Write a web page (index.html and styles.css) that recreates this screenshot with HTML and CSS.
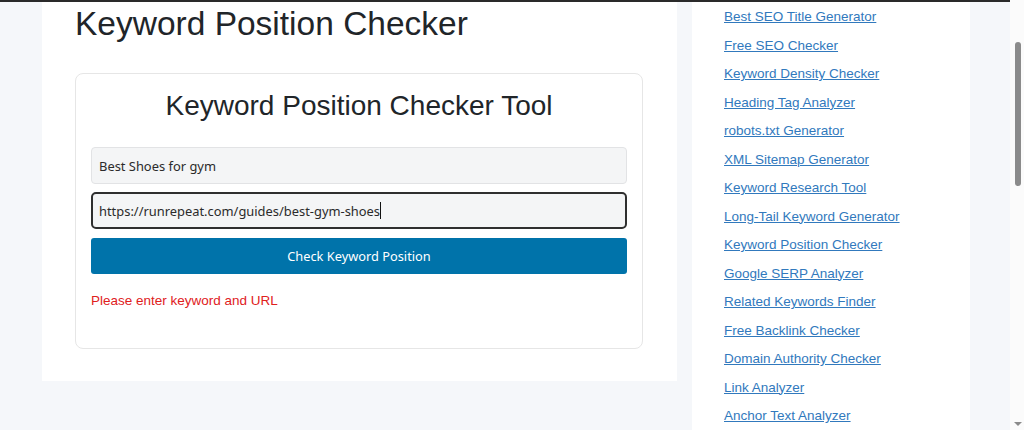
FILE: index.html
```html
<!DOCTYPE html>
<html lang="en">
<head>
<meta charset="utf-8">
<title>Keyword Position Checker</title>
<link rel="stylesheet" href="styles.css">
</head>
<body>
<div class="frame">
  <div class="viewport">
    <div class="topline"></div>
    <div class="page">
      <main class="main">
        <h1 class="page-title">Keyword Position Checker</h1>
        <section class="card">
          <h2 class="card-title">Keyword Position Checker Tool</h2>
          <div class="field">Best Shoes for gym</div>
          <div class="field field-focus">https://runrepeat.com/guides/best-gym-shoes<span class="caret"></span></div>
          <button class="btn" type="button">Check Keyword Position</button>
          <p class="error">Please enter keyword and URL</p>
        </section>
      </main>
      <aside class="sidebar">
        <ul class="links">
          <li><a href="#">Best SEO Title Generator</a></li>
          <li><a href="#">Free SEO Checker</a></li>
          <li><a href="#">Keyword Density Checker</a></li>
          <li><a href="#">Heading Tag Analyzer</a></li>
          <li><a href="#">robots.txt Generator</a></li>
          <li><a href="#">XML Sitemap Generator</a></li>
          <li><a href="#">Keyword Research Tool</a></li>
          <li><a href="#">Long-Tail Keyword Generator</a></li>
          <li><a href="#">Keyword Position Checker</a></li>
          <li><a href="#">Google SERP Analyzer</a></li>
          <li><a href="#">Related Keywords Finder</a></li>
          <li><a href="#">Free Backlink Checker</a></li>
          <li><a href="#">Domain Authority Checker</a></li>
          <li><a href="#">Link Analyzer</a></li>
          <li><a href="#">Anchor Text Analyzer</a></li>
        </ul>
      </aside>
    </div>
  </div>
  <div class="scrollbar">
    <div class="thumb"></div>
    <div class="arrow"></div>
  </div>
</div>
</body>
</html>
```

FILE: styles.css
```css
html, body {
  margin: 0;
  padding: 0;
  height: 430px;
  overflow: hidden;
}
body {
  font-family: "Liberation Sans", Arial, sans-serif;
  background: #f5f7fa;
  color: #212529;
}
.frame {
  display: flex;
  height: 430px;
}
.viewport {
  flex: 1;
  display: flex;
  flex-direction: column;
  min-width: 0;
}
.topline {
  height: 2px;
  background: #2a2a2a;
  flex: none;
}
.page {
  flex: 1;
  display: flex;
  align-items: flex-start;
  padding-left: 42px;
  gap: 15px;
}
.main {
  width: 635px;
  height: 379px;
  box-sizing: border-box;
  background: #fff;
  padding: 2px 34px 0 33px;
}
.page-title {
  margin: 0;
  font-size: 33.5px;
  line-height: 40px;
  font-weight: 400;
  color: #212529;
}
.card {
  margin-top: 29px;
  border: 1px solid #e6e6e6;
  border-radius: 8px;
  padding: 15px 15px 37px;
  display: flex;
  flex-direction: column;
}
.card-title {
  margin: 0 0 25px;
  font-size: 28px;
  line-height: 33px;
  font-weight: 400;
  text-align: center;
  color: #212529;
}
.field {
  height: 37px;
  box-sizing: border-box;
  border: 1px solid #e2e3e5;
  border-radius: 4px;
  background: #f4f5f6;
  padding: 0 7px;
  display: flex;
  align-items: center;
  font-family: "Noto Sans", "Open Sans", sans-serif;
  font-size: 12.9px;
  color: #2b2b2b;
  margin-bottom: 8px;
}
.field-focus {
  border: 2px solid #2f2f2f;
  border-radius: 5px;
  padding: 0 6px;
  margin-bottom: 9px;
}
.caret {
  display: inline-block;
  width: 1px;
  height: 17px;
  background: #111;
  margin-left: 0;
}
.btn {
  height: 36px;
  border: none;
  border-radius: 3px;
  background: #0073aa;
  color: #fff;
  font-family: "Noto Sans", "Open Sans", sans-serif;
  font-size: 12.8px;
  padding: 0;
  cursor: pointer;
}
.error {
  margin: 17px 0 0;
  font-size: 13.5px;
  line-height: 20px;
  color: #e0201c;
}
.sidebar {
  width: 278px;
  align-self: stretch;
  background: #fff;
  padding: 1px 0 0 32px;
  box-sizing: border-box;
}
.links {
  list-style: none;
  margin: 0;
  padding: 0;
}
.links li {
  font-size: 13.5px;
  line-height: 28.5px;
}
.links a {
  color: #3179bd;
  text-decoration: underline;
}
.scrollbar {
  width: 14px;
  flex: none;
  background: #fbfbfb;
  position: relative;
}
.thumb {
  position: absolute;
  left: 5px;
  top: 42px;
  width: 6px;
  height: 144px;
  border-radius: 3px;
  background: #8b8b8b;
}
.arrow {
  position: absolute;
  left: 4px;
  bottom: 4px;
  width: 0;
  height: 0;
  border-left: 4px solid transparent;
  border-right: 4px solid transparent;
  border-top: 4px solid #8b8b8b;
}
```
